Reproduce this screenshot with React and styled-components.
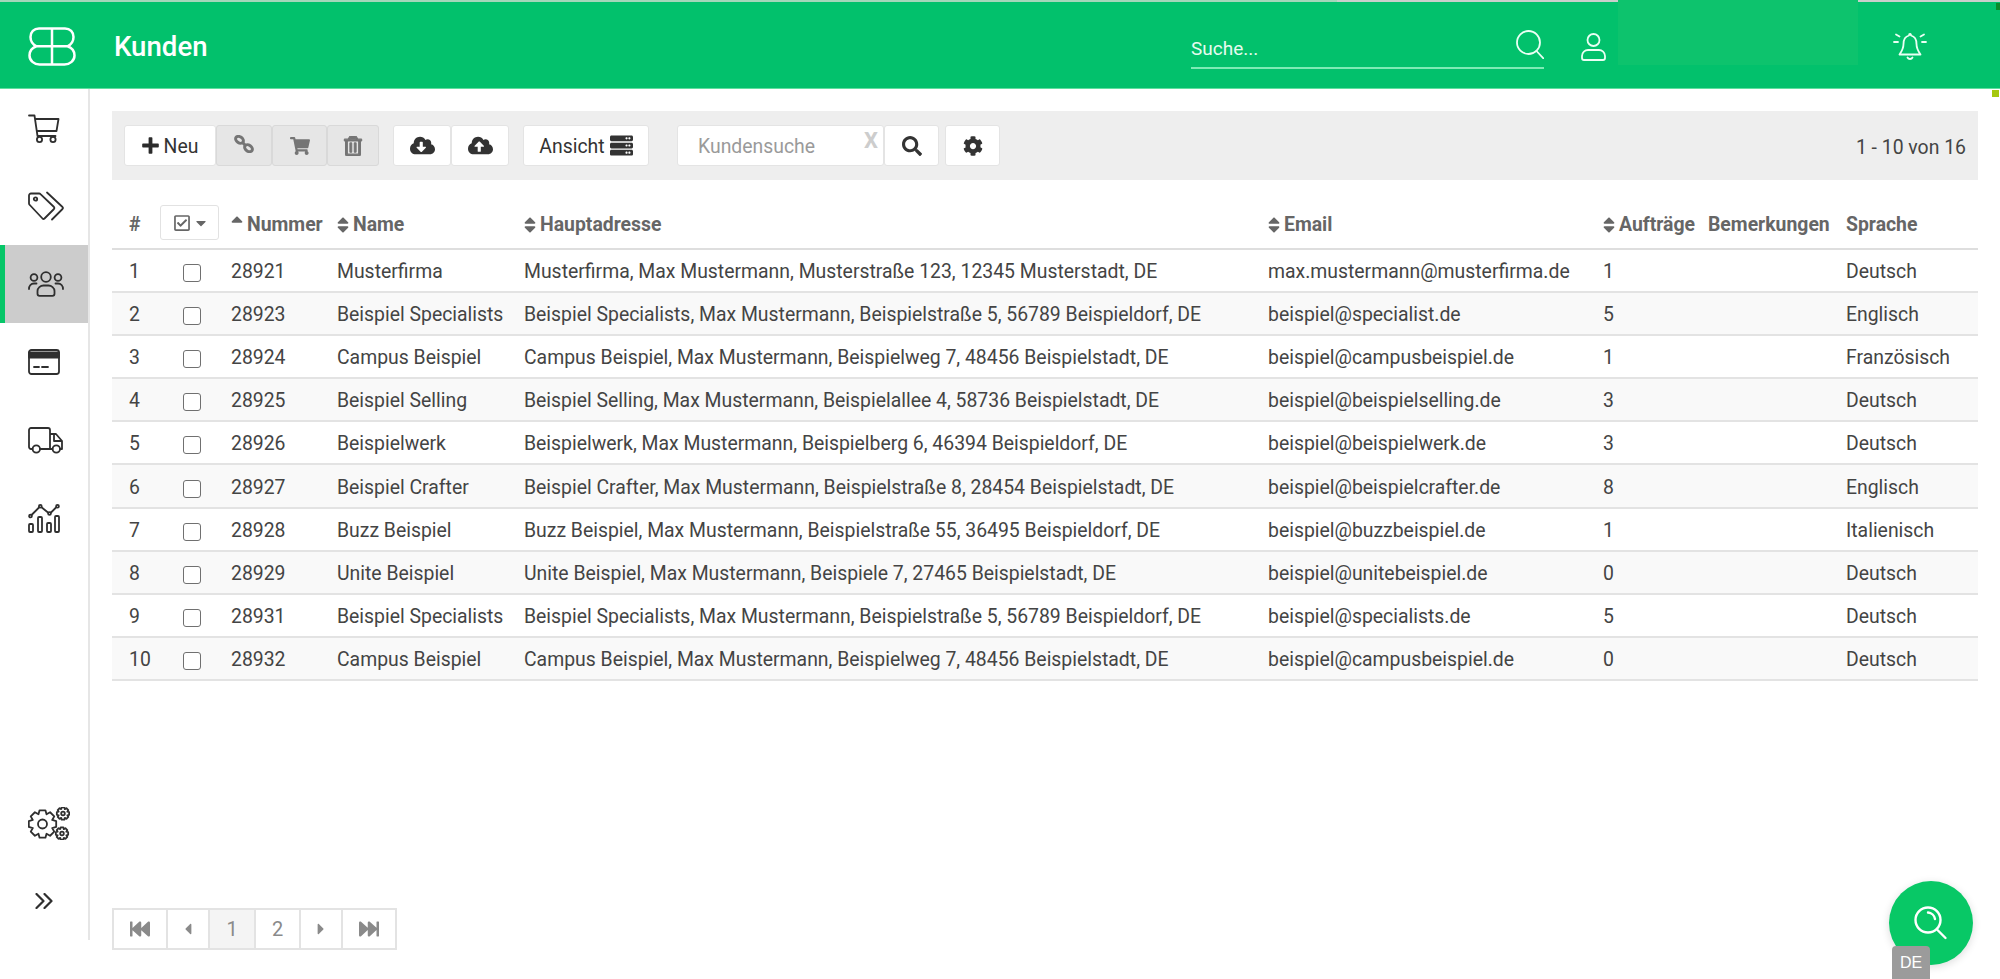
import React from "react";
import styled, { createGlobalStyle } from "styled-components";
import {
  FaShoppingCart, FaRegTrashAlt, FaCloudDownloadAlt, FaCloudUploadAlt, FaServer,
  FaSearch, FaCog, FaSort, FaSortUp, FaRegCheckSquare, FaCaretDown, FaCaretLeft, FaCaretRight,
  FaFastBackward, FaFastForward,
} from "react-icons/fa";

const Global = createGlobalStyle`
  html, body { margin: 0; padding: 0; height: 100%; background: #fff; overflow: hidden; }
  body { font-family: Roboto, "Liberation Sans", sans-serif; font-size: 19.4px; color: #444; }
  * { box-sizing: border-box; }
`;

const Page = styled.div`
  width: 2000px;
  height: 979px;
  display: flex;
  flex-direction: column;
  position: relative;
  overflow: hidden;
`;

const Header = styled.header`
  position: relative;
  height: 89px;
  flex: none;
  display: flex;
  align-items: center;
  padding: 5px 72px 0 28px;
  background: #02c16c;
  border-bottom: 1px solid #5fdf9f;
`;
const TopStrip = styled.div`
  position: absolute;
  left: 0;
  right: 0;
  top: 0;
  height: 2px;
  background: linear-gradient(to right, #a5d6ba 0, #a5d6ba 1337px, #c9cfcb 1337px);
`;
const Redaction = styled.div`
  position: absolute;
  left: 1618px;
  top: 0;
  width: 240px;
  height: 65px;
  background: #0dc36d;
`;
const CornerDot = styled.div`
  position: absolute;
  right: 0;
  top: 3px;
  width: 4px;
  height: 7px;
  background: #0b8a2a;
`;
const LimeDot = styled.div`
  position: absolute;
  right: 1px;
  top: 90px;
  width: 7px;
  height: 7px;
  background: #a5c80f;
`;
const Logo = styled.svg`
  width: 48px;
  height: 39px;
  flex: none;
`;
const Title = styled.h1`
  margin: 0 0 0 38px;
  font-size: 27.6px;
  font-weight: 500;
  color: #fff;
`;
const Spacer = styled.div`
  flex: 1;
`;
const GlobalSearch = styled.div`
  width: 353px;
  height: 44px;
  display: flex;
  align-items: flex-start;
  justify-content: space-between;
  border-bottom: 2px solid #7debb5;
  margin-top: 1px;
`;
const GlobalInput = styled.input`
  border: 0;
  outline: 0;
  background: transparent;
  padding: 12px 0 0;
  width: 200px;
  font: 400 19px Roboto, sans-serif;
  color: #fff;
  &::placeholder { color: #e6fbef; opacity: 1; }
`;
const HeaderIcon = styled.svg`
  flex: none;
  fill: none;
  stroke: #eafff4;
  stroke-width: 1.8;
  stroke-linecap: round;
  stroke-linejoin: round;
  margin-left: ${(p) => p.$left || 0}px;
  margin-top: ${(p) => p.$top || 0}px;
`;

const Body = styled.div`
  flex: 1;
  display: flex;
  min-height: 0;
`;
const Sidebar = styled.nav`
  width: 90px;
  height: 851px;
  flex: none;
  display: flex;
  flex-direction: column;
  border-right: 2px solid #e6e6e6;
`;
const NavItem = styled.div`
  height: 78px;
  flex: none;
  display: flex;
  align-items: center;
  padding-left: 23px;
  border-left: 5px solid ${(p) => (p.$active ? "#06c668" : "transparent")};
  background: ${(p) => (p.$active ? "#cccccc" : "transparent")};
`;
const NavBottom = styled.div`
  margin-top: auto;
`;
const NavIcon = styled.svg`
  fill: none;
  stroke: #2f2f2f;
  stroke-width: 1.8;
  stroke-linecap: round;
  stroke-linejoin: round;
`;

const Main = styled.main`
  flex: 1;
  min-width: 0;
  display: flex;
  flex-direction: column;
  padding: 22px 22px 29px;
`;
const Toolbar = styled.div`
  height: 69px;
  flex: none;
  display: flex;
  align-items: center;
  padding: 0 12px;
  background: #eeeeee;
  color: #333;
`;
const Group = styled.div`
  display: flex;
  margin-right: ${(p) => p.$gap}px;
`;
const ToolButton = styled.button`
  width: ${(p) => p.$w}px;
  height: 41px;
  padding: 0;
  display: flex;
  align-items: center;
  justify-content: center;
  gap: ${(p) => p.$gapx || 0}px;
  background: ${(p) => (p.$off ? "#e6e6e6" : "#fff")};
  border: 1px solid ${(p) => (p.$off ? "#d9d9d9" : "#e4e4e4")};
  border-radius: 3px;
  color: ${(p) => (p.$off ? "#757575" : "#333")};
  font: 400 19.4px Roboto, sans-serif;
`;
const ButtonLabel = styled.span`
  padding-top: 2px;
`;
const SearchWrap = styled.div`
  position: relative;
  width: 207px;
  height: 41px;
`;
const SearchInput = styled.input`
  width: 100%;
  height: 100%;
  border: 1px solid #e4e4e4;
  border-radius: 3px;
  outline: 0;
  padding: 2px 0 0 20px;
  background: #fff;
  font: 400 19.4px Roboto, sans-serif;
  &::placeholder { color: #9a9a9a; opacity: 1; }
`;
const ClearMark = styled.span`
  position: absolute;
  right: 6px;
  top: 3px;
  font: 700 22px Roboto, sans-serif;
  color: #cdcdcd;
  text-transform: uppercase;
`;
const Count = styled.div`
  margin-left: auto;
  padding-top: 3px;
  font-size: 19.4px;
  color: #444;
`;

const Table = styled.table`
  width: 1866px;
  table-layout: fixed;
  border-collapse: collapse;
  flex: none;
`;
const Th = styled.th`
  height: 69px;
  padding: 0 0 11px ${(p) => p.$pl || 0}px;
  vertical-align: bottom;
  text-align: left;
  font-weight: 700;
  font-size: 19.4px;
  line-height: 24px;
  color: #666;
  border-bottom: 2px solid #dedede;
  white-space: nowrap;
`;
const Sort = styled.span`
  display: flex;
  align-items: center;
  gap: 4px;
`;
const SortBoth = styled(FaSort)`
  width: 12px;
  height: 20px;
  flex: none;
`;
const SortAsc = styled(FaSortUp)`
  width: 12px;
  height: 20px;
  flex: none;
  margin-top: -2px;
`;
const SelectAll = styled.button`
  width: 59px;
  height: 35px;
  margin-bottom: -3px;
  display: flex;
  align-items: center;
  justify-content: center;
  gap: 2px;
  padding: 0 0 0 2px;
  background: #fff;
  border: 1px solid #e2e2e2;
  border-radius: 3px;
  color: #666;
`;
const Row = styled.tr`
  background: ${(p) => (p.$even ? "#f9f9f9" : "#fff")};
`;
const Td = styled.td`
  height: 43.1px;
  padding: 2px 0 0 ${(p) => p.$pl || 0}px;
  border-bottom: 2px solid #e3e3e3;
  font-size: 19.4px;
  color: #444;
  white-space: nowrap;
`;
const RowCheck = styled.input`
  appearance: none;
  display: block;
  width: 18px;
  height: 18px;
  margin: 3px 0 0 23px;
  background: #fff;
  border: 1.5px solid #707070;
  border-radius: 3px;
`;

const Pager = styled.div`
  margin-top: auto;
  align-self: flex-start;
  display: flex;
  height: 42px;
  border: 2px solid #e3e3e3;
  color: #8a8a8a;
`;
const PageCell = styled.div`
  width: ${(p) => p.$w}px;
  display: flex;
  align-items: center;
  justify-content: center;
  font-size: 20px;
  background: ${(p) => (p.$active ? "#f4f4f4" : "#fff")};
  border-left: ${(p) => (p.$first ? "0" : "2px solid #e3e3e3")};
`;

const Fab = styled.button`
  position: absolute;
  left: 1889px;
  top: 881px;
  width: 84px;
  height: 84px;
  padding: 0;
  border: 0;
  border-radius: 50%;
  background: #08c866;
  box-shadow: 0 2px 8px rgba(0, 0, 0, 0.14);
  display: flex;
  align-items: center;
  justify-content: center;
`;
const LangBadge = styled.div`
  position: absolute;
  left: 1892px;
  top: 946px;
  width: 38px;
  height: 33px;
  border-radius: 4px 4px 0 0;
  background: #9b9b9b;
  color: #fff;
  font: 400 16px "Liberation Sans", sans-serif;
  display: flex;
  align-items: center;
  justify-content: center;
`;

const gearPath = (cx, cy, ro, ri, teeth) => {
  const pts = [];
  const step = (Math.PI * 2) / teeth;
  for (let i = 0; i < teeth; i++) {
    const a = i * step - Math.PI / 2;
    [[ri, -0.5], [ro, -0.27], [ro, 0.27], [ri, 0.5]].forEach(([r, k]) => {
      const t = a + k * step;
      pts.push(`${(cx + r * Math.cos(t)).toFixed(2)} ${(cy + r * Math.sin(t)).toFixed(2)}`);
    });
  }
  return "M" + pts.join("L") + "Z";
};

const CartIcon = () => (
  <NavIcon width="32" height="29" viewBox="0 0 32 29">
    <path d="M1 1.5H6.5L9.5 22H27.5M7.2 5H30.5L28.5 17H8.8" />
    <circle cx="11.5" cy="25.5" r="2.6" />
    <circle cx="25" cy="25.5" r="2.6" />
  </NavIcon>
);
const TagIcon = () => (
  <NavIcon width="36" height="30" viewBox="0 0 36 30">
    <path d="M3 2.5H11a2 2 0 0 1 1.5.6L26 16a1.5 1.5 0 0 1 0 2L16.5 27.5a1.5 1.5 0 0 1-2 0L1.8 14a2 2 0 0 1-.8-1.5V4.5a2 2 0 0 1 2-2Z" />
    <circle cx="7.5" cy="8" r="1.7" />
    <path d="M19 1.5 34.5 16a1.5 1.5 0 0 1 0 2L24 28.5" />
  </NavIcon>
);
const UsersIcon = () => (
  <NavIcon width="36" height="26" viewBox="0 0 36 26">
    <circle cx="18" cy="6" r="4.8" />
    <circle cx="6" cy="6.5" r="3.4" />
    <circle cx="30" cy="6.5" r="3.4" />
    <path d="M11.5 24.8h13a2 2 0 0 0 2-2V20c0-3-3-5.5-6-5.5h-5c-3 0-6 2.5-6 5.5v2.8a2 2 0 0 0 2 2ZM1 18c0-3 2-5.5 5-5.5h2.5M35 18c0-3-2-5.5-5-5.5h-2.500" />
  </NavIcon>
);
const CardIcon = () => (
  <NavIcon width="32" height="26" viewBox="0 0 32 26">
    <rect x="1" y="1" width="30" height="24" rx="2.5" />
    <rect x="1" y="3.5" width="30" height="5" fill="#2f2f2f" />
    <path d="M6 18h5M14 18h6" />
  </NavIcon>
);
const TruckIcon = () => (
  <NavIcon width="36" height="27" viewBox="0 0 36 27">
    <path d="M4.5 22H3a2 2 0 0 1-2-2V3a2 2 0 0 1 2-2H20a2 2 0 0 1 2 2V22H12M22 7h6l6 7v8h-2M22 22h2.5M26 8v6h8" />
    <circle cx="8.3" cy="22" r="3.7" />
    <circle cx="28.3" cy="22" r="3.7" />
  </NavIcon>
);
const ChartIcon = () => (
  <NavIcon width="32" height="30" viewBox="0 0 32 30">
    <rect x="1" y="21" width="4" height="8" rx="1" />
    <rect x="10" y="14" width="4" height="15" rx="1" />
    <rect x="19" y="20" width="4" height="9" rx="1" />
    <rect x="27" y="13" width="4" height="16" rx="1" />
    <path d="M3.5 12 11 4.5M13.8 4.5 20 9.5M23 9.5 28 4.5" />
    <circle cx="2.5" cy="13" r="1.4" />
    <circle cx="12.3" cy="3.3" r="1.4" />
    <circle cx="21.5" cy="10.5" r="1.4" />
    <circle cx="29.5" cy="3.3" r="1.4" />
  </NavIcon>
);
const GearsIcon = () => (
  <NavIcon width="42" height="33" viewBox="0 0 42 33">
    <path d={gearPath(14.5, 17, 14, 10.5, 8)} />
    <circle cx="14.5" cy="17" r="4.5" />
    <path d={gearPath(35, 6.5, 6.3, 4.7, 8)} />
    <circle cx="35" cy="6.5" r="1.8" />
    <path d={gearPath(34, 26.5, 6.3, 4.7, 8)} />
    <circle cx="34" cy="26.5" r="1.8" />
  </NavIcon>
);
const ChevronsIcon = () => (
  <NavIcon width="18" height="16" viewBox="0 0 18 16" style={{ marginLeft: 7, strokeWidth: 2.2 }}>
    <path d="M1.5 1 8.5 8l-7 7M9.5 1l7 7-7 7" />
  </NavIcon>
);
const ChainIcon = () => (
  <svg width="20" height="18" viewBox="0 0 20 18" fill="none" stroke="#757575" strokeWidth="3" style={{ marginTop: -4 }}>
    <ellipse cx="5.5" cy="4.8" rx="4.2" ry="3" transform="rotate(35 5.5 4.8)" />
    <ellipse cx="14.5" cy="13.2" rx="4.2" ry="3" transform="rotate(35 14.5 13.2)" />
    <path d="M8 7l4 4" />
  </svg>
);
const PlusIcon = () => (
  <svg width="17" height="17" viewBox="0 0 17 17" fill="#2b2b2b">
    <path d="M6.6 1a.8.8 0 0 1 .8-.8h2.2a.8.8 0 0 1 .8.8v5.400H16a.8.8 0 0 1 .8.8v2.600a.8.8 0 0 1-.8.8h-5.600V16a.8.8 0 0 1-.8.8H7.400a.8.8 0 0 1-.8-.8v-5.400H1a.8.8 0 0 1-.8-.8V7.200A.8.8 0 0 1 1 6.400h5.600Z" />
  </svg>
);

const rows = [
  ["28921", "Musterfirma", "Musterfirma, Max Mustermann, Musterstraße 123, 12345 Musterstadt, DE", "max.mustermann@musterfirma.de", "1", "Deutsch"],
  ["28923", "Beispiel Specialists", "Beispiel Specialists, Max Mustermann, Beispielstraße 5, 56789 Beispieldorf, DE", "beispiel@specialist.de", "5", "Englisch"],
  ["28924", "Campus Beispiel", "Campus Beispiel, Max Mustermann, Beispielweg 7, 48456 Beispielstadt, DE", "beispiel@campusbeispiel.de", "1", "Französisch"],
  ["28925", "Beispiel Selling", "Beispiel Selling, Max Mustermann, Beispielallee 4, 58736 Beispielstadt, DE", "beispiel@beispielselling.de", "3", "Deutsch"],
  ["28926", "Beispielwerk", "Beispielwerk, Max Mustermann, Beispielberg 6, 46394 Beispieldorf, DE", "beispiel@beispielwerk.de", "3", "Deutsch"],
  ["28927", "Beispiel Crafter", "Beispiel Crafter, Max Mustermann, Beispielstraße 8, 28454 Beispielstadt, DE", "beispiel@beispielcrafter.de", "8", "Englisch"],
  ["28928", "Buzz Beispiel", "Buzz Beispiel, Max Mustermann, Beispielstraße 55, 36495 Beispieldorf, DE", "beispiel@buzzbeispiel.de", "1", "Italienisch"],
  ["28929", "Unite Beispiel", "Unite Beispiel, Max Mustermann, Beispiele 7, 27465 Beispielstadt, DE", "beispiel@unitebeispiel.de", "0", "Deutsch"],
  ["28931", "Beispiel Specialists", "Beispiel Specialists, Max Mustermann, Beispielstraße 5, 56789 Beispieldorf, DE", "beispiel@specialists.de", "5", "Deutsch"],
  ["28932", "Campus Beispiel", "Campus Beispiel, Max Mustermann, Beispielweg 7, 48456 Beispielstadt, DE", "beispiel@campusbeispiel.de", "0", "Deutsch"],
];
const colWidths = [48, 71, 106, 187, 744, 335, 105, 138, 132];

export default function App() {
  return (
    <Page>
      <Global />
      <Header>
        <TopStrip />
        <Redaction />
        <CornerDot />
        <Logo viewBox="0 0 48 39" fill="none" stroke="#fff" strokeWidth="2.5" strokeLinejoin="round">
          <path d="M24 1.5H11C5.8 1.5 2.5 5.3 2.5 10C2.5 14 4.5 17.3 8.5 19.3C3.8 21 1.5 24.5 1.5 28.5C1.5 33.5 6 37.5 11.5 37.5H36.5C42 37.5 46.5 33.5 46.5 28.5C46.5 24.5 44.2 21 39.5 19.3C43.5 17.3 45.5 14 45.5 10C45.5 5.3 42.2 1.5 37 1.5ZM24 1.5V37.5M8.5 19.3H39.5" />
        </Logo>
        <Title>Kunden</Title>
        <Spacer />
        <GlobalSearch>
          <GlobalInput placeholder="Suche..." readOnly />
          <HeaderIcon width="28" height="29" viewBox="0 0 28 29" $top={5}>
            <circle cx="12.5" cy="12.5" r="11.5" />
            <path d="M20.5 21 27.5 28.5" />
          </HeaderIcon>
        </GlobalSearch>
        <HeaderIcon width="25" height="28" viewBox="0 0 25 28" $left={37}>
          <circle cx="12.5" cy="7" r="6" />
          <path d="M3 27h19a2 2 0 0 0 2-2v-2c0-3.5-3-6-6-6H7c-3 0-6 2.5-6 6v2a2 2 0 0 0 2 2Z" />
        </HeaderIcon>
        <HeaderIcon width="36" height="29" viewBox="0 0 36 29" $left={286}>
          <path d="M18 2c-1 0-1 1-1 1.5C13 4.5 11.5 8 11.5 12c0 4-1.5 7-4 10.5h21c-2.5-3.5-4-6.5-4-10.5 0-4-1.5-7.5-5.500-8.500C19 3 19 2 18 2ZM15.500 25.500c1 2 4 2 5 0M2 10h4M30 10h4M4 2.500l3.500 2M32 2.500l-3.500 2" />
        </HeaderIcon>
      </Header>
      <LimeDot />
      <Body>
        <Sidebar>
          <NavItem><CartIcon /></NavItem>
          <NavItem><TagIcon /></NavItem>
          <NavItem $active><UsersIcon /></NavItem>
          <NavItem><CardIcon /></NavItem>
          <NavItem><TruckIcon /></NavItem>
          <NavItem><ChartIcon /></NavItem>
          <NavBottom>
            <NavItem><GearsIcon /></NavItem>
            <NavItem><ChevronsIcon /></NavItem>
          </NavBottom>
        </Sidebar>
        <Main>
          <Toolbar>
            <Group $gap={14}>
              <ToolButton $w={92} $gapx={5}><PlusIcon /><ButtonLabel>Neu</ButtonLabel></ToolButton>
              <ToolButton $w={56} $off><ChainIcon /></ToolButton>
              <ToolButton $w={55} $off><FaShoppingCart size={20} /></ToolButton>
              <ToolButton $w={52} $off><FaRegTrashAlt size={20} strokeWidth={26} /></ToolButton>
            </Group>
            <Group $gap={14}>
              <ToolButton $w={58}><FaCloudDownloadAlt size={25} /></ToolButton>
              <ToolButton $w={58}><FaCloudUploadAlt size={25} /></ToolButton>
            </Group>
            <Group $gap={28}>
              <ToolButton $w={126} $gapx={5}><ButtonLabel>Ansicht</ButtonLabel><FaServer size={23} /></ToolButton>
            </Group>
            <Group $gap={6}>
              <SearchWrap>
                <SearchInput placeholder="Kundensuche" readOnly />
                <ClearMark>x</ClearMark>
              </SearchWrap>
              <ToolButton $w={55}><FaSearch size={20} /></ToolButton>
            </Group>
            <ToolButton $w={55}><FaCog size={20} /></ToolButton>
            <Count>1 - 10 von 16</Count>
          </Toolbar>
          <Table>
            <colgroup>
              {colWidths.map((w, i) => <col key={i} style={{ width: w }} />)}
            </colgroup>
            <thead>
              <tr>
                <Th $pl={17}>#</Th>
                <Th>
                  <SelectAll><FaRegCheckSquare size={18} /><FaCaretDown size={16} /></SelectAll>
                </Th>
                <Th><Sort><SortAsc />Nummer</Sort></Th>
                <Th><Sort><SortBoth />Name</Sort></Th>
                <Th><Sort><SortBoth />Hauptadresse</Sort></Th>
                <Th><Sort><SortBoth />Email</Sort></Th>
                <Th><Sort><SortBoth />Aufträge</Sort></Th>
                <Th>Bemerkungen</Th>
                <Th>Sprache</Th>
              </tr>
            </thead>
            <tbody>
              {rows.map((r, i) => (
                <Row key={r[0]} $even={i % 2 === 1}>
                  <Td $pl={17}>{i + 1}</Td>
                  <Td><RowCheck type="checkbox" readOnly /></Td>
                  <Td>{r[0]}</Td>
                  <Td>{r[1]}</Td>
                  <Td>{r[2]}</Td>
                  <Td>{r[3]}</Td>
                  <Td>{r[4]}</Td>
                  <Td />
                  <Td>{r[5]}</Td>
                </Row>
              ))}
            </tbody>
          </Table>
          <Pager>
            <PageCell $w={52} $first><FaFastBackward size={20} /></PageCell>
            <PageCell $w={42}><FaCaretLeft size={18} /></PageCell>
            <PageCell $w={46} $active>1</PageCell>
            <PageCell $w={45}>2</PageCell>
            <PageCell $w={42}><FaCaretRight size={18} /></PageCell>
            <PageCell $w={54}><FaFastForward size={20} /></PageCell>
          </Pager>
        </Main>
      </Body>
      <Fab aria-label="Suche">
        <svg width="34" height="34" viewBox="0 0 34 34" fill="none" stroke="#fff" strokeWidth="2.4" strokeLinecap="round">
          <circle cx="14" cy="14" r="12.5" />
          <path d="M14 6.5c3.5.3 6.5 3 7 6.500M23.500 24 31.500 32" />
        </svg>
      </Fab>
      <LangBadge>DE</LangBadge>
    </Page>
  );
}
